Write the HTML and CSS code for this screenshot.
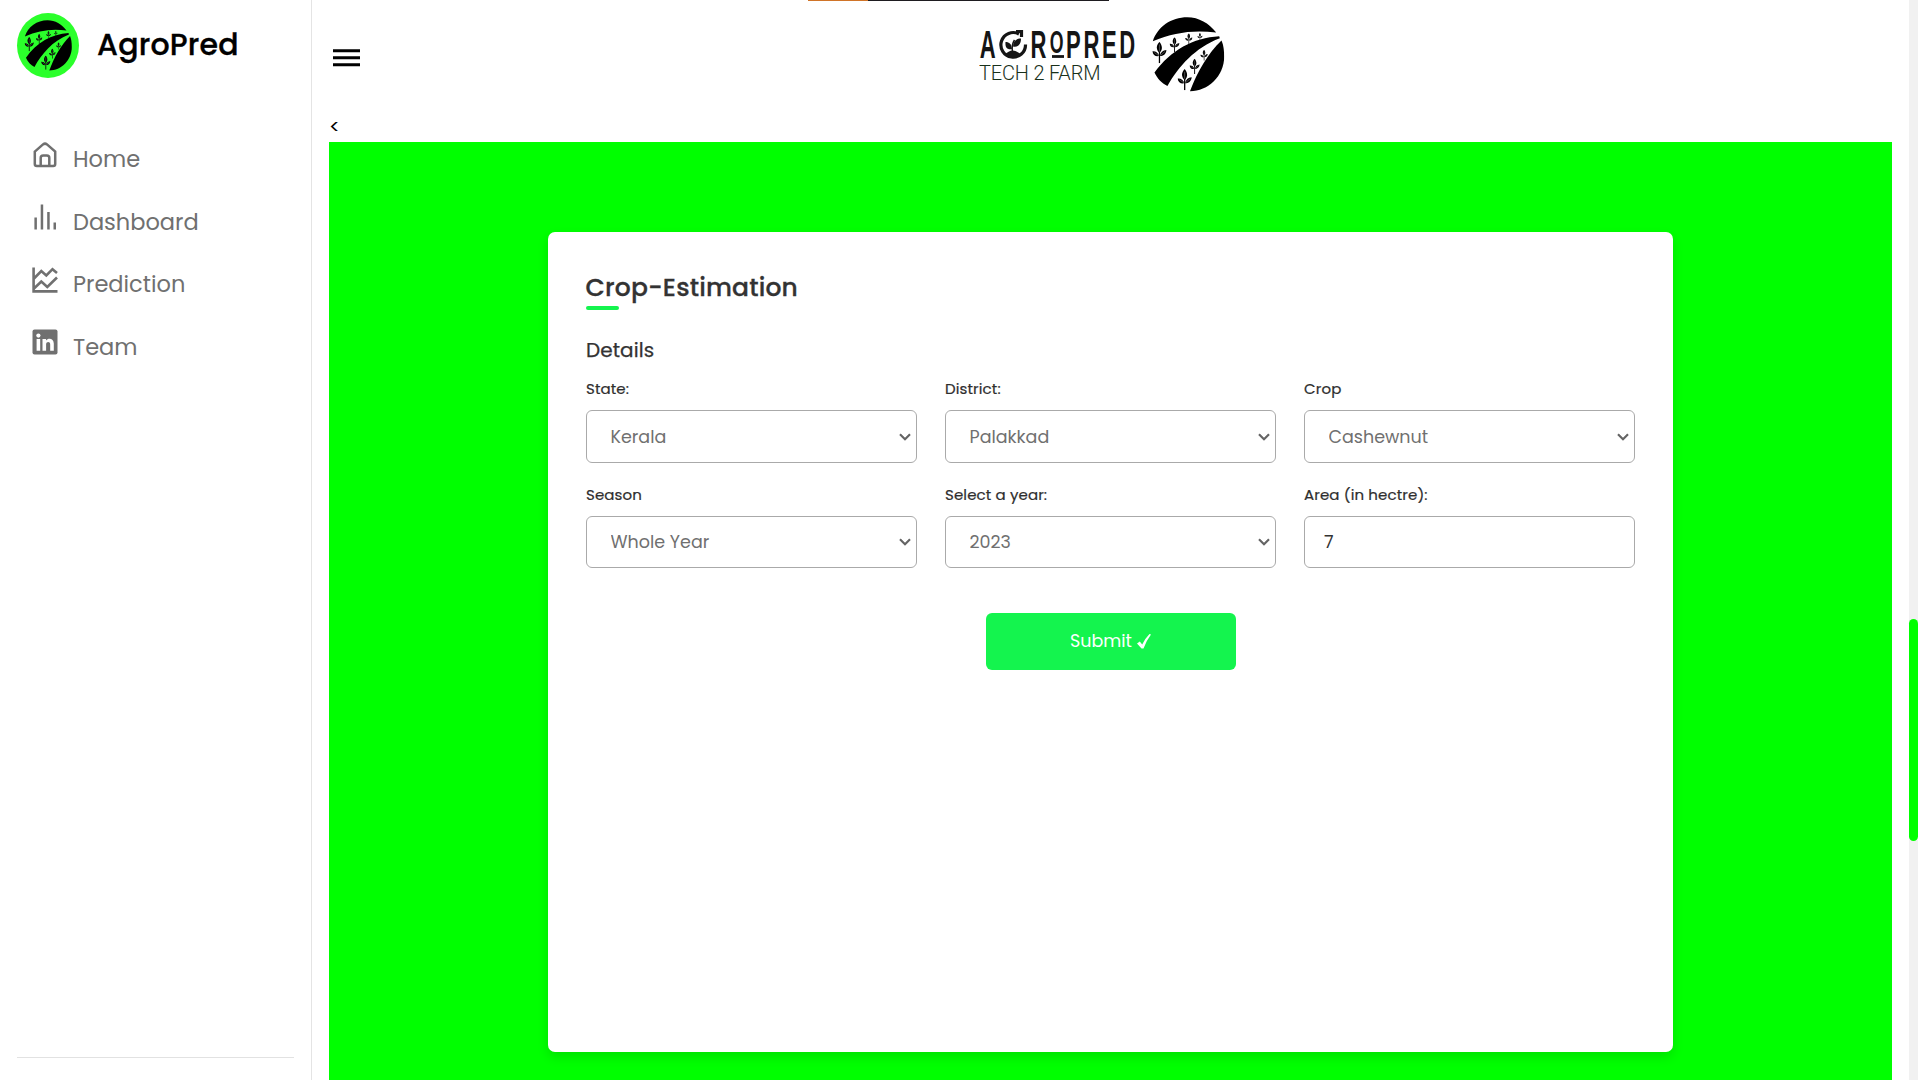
FILE: index.html
```html
<!DOCTYPE html>
<html lang="en">
<head>
<meta charset="utf-8">
<title>AgroPred</title>
<link rel="stylesheet" href="styles.css">
</head>
<body>
<svg class="defs" aria-hidden="true">
  <symbol id="plant" viewBox="0 0 44 66">
    <path d="M22 0C10 12 12 26 22 34C32 26 32 12 22 0Z"/>
    <path d="M0 29C2 42 10 46 21 44C18 33 10 28 0 29Z"/>
    <path d="M44 25C32 26 25 33 23 44C34 44 42 38 44 25Z"/>
    <path d="M20 30H24V66H20Z"/>
    <path class="vein" d="M22 8V30M6 33L20 43M39 30L25 42"/>
  </symbol>
  <symbol id="emblem" viewBox="574 50 220 226" preserveAspectRatio="none">
    <path d="M578 123C592 80 633 51 682 51C717 51 747 69 769 97C700 88 640 97 578 123Z"/>
    <path d="M778 108C700 112 632 151 583 217C592 236 604 248 622 258C655 200 705 142 780 114Z"/>
    <path d="M785 121C744 160 713 213 690 274C744 274 793 228 793 170C793 151 791 135 785 121Z"/>
    <use href="#plant" x="576" y="125" width="44" height="64"/>
    <use href="#plant" x="628" y="111" width="31" height="45"/>
    <use href="#plant" x="675" y="99" width="23" height="33"/>
    <use href="#plant" x="711" y="98" width="18" height="23"/>
    <use href="#plant" x="652" y="207" width="44" height="64"/>
    <use href="#plant" x="688" y="176" width="32" height="46"/>
    <use href="#plant" x="720" y="149" width="25" height="33"/>
  </symbol>
</svg>
<aside class="sidebar">
  <div class="brand">
    <span class="badge"><svg class="badge-art"><use href="#emblem"/></svg></span>
    <span class="brand-name">AgroPred</span>
  </div>
  <nav class="nav">
    <a class="item"><svg class="icon" viewBox="0 0 26 26" fill="none" stroke="currentColor" stroke-width="2.5"><path d="M2.800 9.600 11 2.400q2-1.500 4 0l8.200 7.200V22q0 2-2 2H4.800q-2 0-2-2ZM8.700 24v-8q0-2.500 2.500-2.500h3.600q2.500 0 2.500 2.500v8"/></svg><span>Home</span></a>
    <a class="item"><svg class="icon" viewBox="0 0 26 26" fill="currentColor"><path d="M2.400 13.500h2.500V25.500H2.400ZM8.700 0.500h2.500V25.500H8.700ZM15.200 8h2.500v17.500h-2.500ZM21.500 18.500H24v7h-2.500Z"/></svg><span>Dashboard</span></a>
    <a class="item"><svg class="icon" viewBox="0 0 26 26" fill="none" stroke="currentColor" stroke-width="2.600"><path d="M1.600 0.500V24.400H25.500M2 11.500 9.300 4l5 4.500L20.500 2.200 25 6M2 21.500l7.300-7 6 5.500L25 10.500"/></svg><span>Prediction</span></a>
    <a class="item"><svg class="icon" viewBox="0 0 26 26"><rect x=".5" y=".5" width="25" height="25" rx="2" fill="currentColor"/><circle cx="6.400" cy="6.600" r="2.100" fill="#fff"/><path fill="#fff" d="M4.600 10h3.600v11.700H4.600ZM10.500 10H14v1.600c2-3 7.800-2.600 7.800 3v7.100h-3.600v-6.300c0-3.300-4.100-3-4.100 0v6.300h-3.600Z"/></svg><span>Team</span></a>
  </nav>
  <div class="divider"></div>
</aside>
<main class="main">
  <header class="header">
    <svg class="menu" viewBox="0 0 28 18"><path d="M1 1.700h27M1 8.700h27M1 15.700h27" stroke="#000" stroke-width="3"/></svg>
    <svg class="logo" viewBox="0 0 246 80">
      <text class="wordmark" transform="scale(.58 1)" y="44" x="1.200 89">AR<tspan class="short" x="122" y="38.700">O</tspan><tspan x="150 180 212 242" y="44">PRED</tspan></text>
      <path d="M73 42.500h12" stroke="#151515" stroke-width="2.800"/>
      <path d="M40 20A12.300 12.300 0 1 0 46.500 30.500M37 17.500h5.500v5.500" fill="none" stroke="#151515" stroke-width="3.200"/>
      <path d="M33.500 38c-1-6 0-9 2-12" stroke="#151515" fill="none" stroke-width="1.500"/>
      <path d="M25.500 41q8-9 17 0-8 5-17 0" fill="#151515"/>
      <path d="M26.500 28c4 0 6 2 6.500 7-5 1-7-2-6.500-7ZM42 24.500c-5 0-8 3-8 8 5 1 8-2 8-8Z" fill="#151515"/>
      <text class="tagline" x="0" y="66" textLength="121.500">TECH 2 FARM</text>
      <use href="#emblem" x="172.500" y="3" width="73" height="75"/>
    </svg>
  </header>
  <div class="back">&lt;</div>
  <section class="stage">
    <form class="card">
      <h1 class="title">Crop-Estimation</h1>
      <h2 class="subtitle">Details</h2>
      <div class="fields">
        <label class="field"><span class="caption">State:</span><select class="control"><option>Kerala</option></select></label>
        <label class="field"><span class="caption">District:</span><select class="control"><option>Palakkad</option></select></label>
        <label class="field"><span class="caption">Crop</span><select class="control"><option>Cashewnut</option></select></label>
        <label class="field"><span class="caption">Season</span><select class="control low"><option>Whole Year</option></select></label>
        <label class="field"><span class="caption">Select a year:</span><select class="control low"><option>2023</option></select></label>
        <label class="field"><span class="caption">Area (in hectre):</span><input class="control low text" value="7"></label>
      </div>
      <button type="button" class="submit"><span>Submit</span><svg class="check" viewBox="0 0 14 15"><path d="M0 9.500 2.800 7.500 5.200 10.500Q8 4.500 12.500 0L14 .600Q9.500 6.500 6.500 14.500H4.500Z" fill="#fff"/></svg></button>
    </form>
  </section>
</main>
<div class="scroll"><div class="thumb"></div></div>
<div class="strip"></div>
</body>
</html>
```
FILE: styles.css
```css
* { box-sizing: border-box; }
body { margin: 0; height: 1080px; display: flex; overflow: hidden; background: #fff; font-family: Poppins, Inter, sans-serif; color: #333; }
.defs { position: absolute; width: 0; height: 0; }
.vein { fill: none; stroke: #fff; stroke-width: 1.5; opacity: .6; }
.sidebar { width: 312px; flex: none; border-right: 1px solid #e4e4e4; padding: 13px 17px 22px; display: flex; flex-direction: column; }
.brand { display: flex; align-items: center; gap: 18px; height: 65px; }
.badge { width: 62px; height: 65px; border-radius: 50%; background: #2bff2b; display: flex; align-items: center; justify-content: center; }
.badge-art { width: 48px; height: 51px; }
.badge .vein { stroke: #2bff2b; }
.brand-name { font-size: 30px; line-height: 45px; font-weight: 500; color: #000; padding-bottom: 3px; letter-spacing: .22px; -webkit-text-stroke: .35px #000; }
.nav { margin-top: 50px; padding-left: 15px; flex: 1; }
.item { display: flex; height: 62.6px; gap: 15px; color: #707070; font-size: 22.5px; line-height: 62px; }
.icon { width: 26px; height: 26px; margin-top: 13.5px; flex: none; }
.divider { height: 1px; background: #e2e2e2; width: 277px; }
.main { flex: 1; padding-left: 17px; padding-right: 17px; display: flex; flex-direction: column; }
.header { height: 110px; flex: none; display: flex; padding-left: 3px; }
.menu { width: 28px; height: 18px; margin-top: 49px; }
.logo { width: 246px; height: 80px; margin: 14px 0 0 619px; }
.wordmark { font: 700 38px "Liberation Sans", sans-serif; fill: #151515; }
.short { font-size: 30.5px; }
.tagline { font: 300 20px Roboto, sans-serif; fill: #18301a; }
.back { height: 32px; font-size: 20px; line-height: 34px; color: #000; }
.stage { flex: 1; background: #0f0; padding-top: 90px; }
.card { width: 1125px; height: 820px; margin: 0 auto; background: #fff; border-radius: 7px; box-shadow: 0 5px 12px rgba(0, 0, 0, .12); padding: 38px; display: flex; flex-direction: column; }
.title { margin: 0; font-size: 25px; line-height: 36px; font-weight: 500; height: 40px; letter-spacing: .18px; -webkit-text-stroke: .3px #333; text-indent: -.5px; }
.title::after { content: ""; display: block; width: 33px; height: 4px; border-radius: 2px; background: #14f44e; }
.subtitle { margin: 26px 0 0; font-size: 20px; line-height: 28px; font-weight: 400; -webkit-text-stroke: .25px #333; letter-spacing: .08px; }
.fields { display: grid; grid-template-columns: repeat(3, 331px); justify-content: space-between; row-gap: 20px; margin-top: 13px; }
.field { display: flex; flex-direction: column; gap: 10px; }
.caption { font-size: 15px; font-weight: 400; line-height: 23px; height: 23px; color: #2e2e2e; letter-spacing: .12px; -webkit-text-stroke: .2px #2e2e2e; }
.control { height: 53px; border: 1px solid #aaa; border-radius: 6px; background: #fff; color: #707070; font: 400 17.5px Poppins, Inter, sans-serif; padding: 0 23.5px; width: 331px; outline: 0; appearance: none; }
select.control { background: #fff url("data:image/svg+xml,%3Csvg xmlns='http://www.w3.org/2000/svg' width='12' height='8'%3E%3Cpath d='M1 1.200 6 6.200 11 1.200' fill='none' stroke='%23666' stroke-width='2.200'/%3E%3C/svg%3E") no-repeat right 5px center; }
.low { height: 52px; }
.text { color: #333; padding-left: 19px; }
.submit { align-self: center; width: 250px; height: 57px; margin-top: 45px; padding-bottom: 2px; border: 0; border-radius: 6px; background: #14f44e; color: #fff; font: 400 17.5px Poppins, Inter, sans-serif; display: flex; align-items: center; justify-content: center; gap: 5px; }
.check { width: 14px; height: 15px; }
.scroll { width: 9px; flex: none; background: #f1f1f1; padding-top: 619px; }
.thumb { height: 222px; border-radius: 5px; background: #0f0; }
.strip { position: absolute; left: 808px; top: 0; width: 301px; height: 1px; background: linear-gradient(90deg, #d07428 60px, #1e1c20 60px); }
```
